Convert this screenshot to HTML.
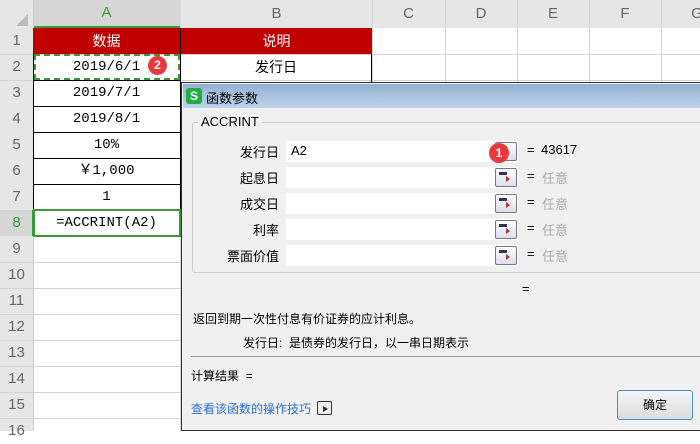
<!DOCTYPE html>
<html><head><meta charset="utf-8"><style>
*{margin:0;padding:0;box-sizing:border-box}
body{width:700px;height:431px;overflow:hidden;background:#fff;position:relative;font-family:"Liberation Sans","Noto Sans CJK SC",sans-serif;font-size:13px;color:#000}
.a{position:absolute}
.hdr{background:#e6e6e6;color:#555;font-size:15px;text-align:center}
.vl{position:absolute;width:1px;background:#d4d4d4}
.hl{position:absolute;height:1px;background:#d4d4d4}
.cell{position:absolute;left:33px;width:147px;text-align:center;font-family:"Liberation Mono","Noto Sans CJK SC",monospace;font-size:14px;line-height:26px}
.lab{position:absolute;right:421px;font-size:13px;text-align:right}
.inp{position:absolute;left:286px;width:232px;height:21px;background:#fff}
.btn{position:absolute;left:495px;width:22px;height:19px;border:1px solid #777;border-radius:2px;background:linear-gradient(#fff,#dde)}
.btn:before{content:"";position:absolute;left:3px;top:3px;width:8px;height:3px;background:#335}
.btn:after{content:"";position:absolute;left:10px;top:7px;width:0;height:0;border-left:4px solid #a33;border-top:3px solid transparent;border-bottom:3px solid transparent}
.eq{position:absolute;left:527px;font-size:13px}
.ry{position:absolute;left:542px;color:#aaa;font-size:13px}
</style></head><body>
<div class="a hdr" style="left:0;top:0;width:700px;height:28px"></div>
<div class="a" style="left:0;top:28px;width:33px;height:403px;background:#e6e6e6"></div>
<div class="a" style="left:33px;top:0;width:147px;height:28px;background:#d6d6d6;border-bottom:2px solid #3a9a3a;color:#3a9a3a;text-align:center;line-height:26px;font-size:15px">A</div>
<div class="a" style="left:181px;top:0;width:191px;line-height:28px;text-align:center;color:#666;font-size:15px">B</div>
<div class="a" style="left:372px;top:0;width:73px;line-height:28px;text-align:center;color:#666;font-size:15px">C</div>
<div class="a" style="left:445px;top:0;width:72px;line-height:28px;text-align:center;color:#666;font-size:15px">D</div>
<div class="a" style="left:517px;top:0;width:72px;line-height:28px;text-align:center;color:#666;font-size:15px">E</div>
<div class="a" style="left:589px;top:0;width:72px;line-height:28px;text-align:center;color:#666;font-size:15px">F</div>
<div class="a" style="left:661px;top:0;width:72px;line-height:28px;text-align:center;color:#666;font-size:15px">G</div>
<div class="a" style="left:16px;top:14px;width:0;height:0;border-left:12px solid transparent;border-bottom:12px solid #bbb"></div>
<div class="a" style="left:0;top:28px;width:33px;color:#666;font-size:15px;text-align:center;line-height:26px">
<div>1</div><div>2</div><div>3</div><div>4</div><div>5</div><div>6</div><div>7</div><div style="color:#3a9a3a;background:#d6d6d6">8</div><div>9</div><div>10</div><div>11</div><div>12</div><div>13</div><div>14</div><div>15</div><div>16</div></div>
<div class="a" style="left:32px;top:210px;width:1px;height:26px;background:#3a9a3a"></div>
<div class="vl" style="left:33px;top:0;height:431px;background:#ccc"></div>
<div class="vl" style="left:180px;top:0;height:431px"></div>
<div class="vl" style="left:372px;top:0;height:84px"></div>
<div class="vl" style="left:445px;top:0;height:84px"></div>
<div class="vl" style="left:517px;top:0;height:84px"></div>
<div class="vl" style="left:589px;top:0;height:84px"></div>
<div class="vl" style="left:661px;top:0;height:84px"></div>
<div class="hl" style="left:0;top:54px;width:700px"></div>
<div class="hl" style="left:0;top:80px;width:700px"></div>
<div class="hl" style="left:0;top:262px;width:180px"></div>
<div class="hl" style="left:0;top:288px;width:180px"></div>
<div class="hl" style="left:0;top:314px;width:180px"></div>
<div class="hl" style="left:0;top:340px;width:180px"></div>
<div class="hl" style="left:0;top:366px;width:180px"></div>
<div class="hl" style="left:0;top:392px;width:180px"></div>
<div class="hl" style="left:0;top:418px;width:180px"></div>
<div class="a" style="left:33px;top:28px;width:339px;height:26px;background:#c00000"></div>
<div class="a" style="left:33px;top:28px;width:147px;line-height:26px;text-align:center;color:#fff;font-size:14px">数据</div>
<div class="a" style="left:180px;top:28px;width:192px;line-height:26px;text-align:center;color:#fff;font-size:14px;border-left:1px solid #000">说明</div>
<div class="a" style="left:180px;top:54px;width:192px;height:30px;border:1px solid #000;border-top:none;line-height:26px;text-align:center;font-size:14px">发行日</div>
<div class="a" style="left:33px;top:54px;width:148px;height:182px;border-left:1px solid #000;border-right:1px solid #000"></div>
<div class="a" style="left:33px;top:80px;width:148px;height:1px;background:#000"></div>
<div class="a" style="left:33px;top:106px;width:148px;height:1px;background:#000"></div>
<div class="a" style="left:33px;top:132px;width:148px;height:1px;background:#000"></div>
<div class="a" style="left:33px;top:158px;width:148px;height:1px;background:#000"></div>
<div class="a" style="left:33px;top:184px;width:148px;height:1px;background:#000"></div>
<div class="a" style="left:33px;top:210px;width:148px;height:1px;background:#000"></div>
<div class="cell" style="top:54px">2019/6/1</div>
<div class="cell" style="top:80px">2019/7/1</div>
<div class="cell" style="top:106px">2019/8/1</div>
<div class="cell" style="top:132px">10%</div>
<div class="cell" style="top:158px">￥1,000</div>
<div class="cell" style="top:184px">1</div>
<div class="cell" style="top:210px">=ACCRINT(A2)</div>
<div class="a" style="left:34px;top:54px;width:146px;height:26px;border:2px dashed #3a9a3a;background:transparent"></div>
<div class="a" style="left:33px;top:209px;width:148px;height:28px;border:2px solid #3a9a3a"></div>
<div class="a" style="left:148px;top:56px;width:19px;height:19px;border-radius:50%;background:#e8393f;color:#fff;font-size:12px;font-weight:bold;text-align:center;line-height:19px">2</div>
<div class="a" style="left:181px;top:82px;width:519px;height:349px;background:#f0f0f0;border:1px solid #333;border-right:none"></div>
<div class="a" style="left:183px;top:84px;width:517px;height:24px;background:linear-gradient(#94b1d2,#bdd3ec)"></div>
<div class="a" style="left:186px;top:88px;width:16px;height:16px;border-radius:3px;background:#1fae3f;color:#fff;font-size:12px;font-weight:bold;text-align:center;line-height:16px">S</div>
<div class="a" style="left:206px;top:88px;font-size:13px">函数参数</div>
<div class="a" style="left:192px;top:122px;width:520px;height:151px;border:1px solid #ccc;border-radius:3px"></div>
<div class="a" style="left:198px;top:114px;background:#f0f0f0;padding:0 3px;font-size:13px">ACCRINT</div>
<div class="lab" style="top:142px">发行日</div>
<div class="lab" style="top:168px">起息日</div>
<div class="lab" style="top:194px">成交日</div>
<div class="lab" style="top:220px">利率</div>
<div class="lab" style="top:246px">票面价值</div>
<div class="inp" style="top:141px"></div><div class="a" style="left:291px;top:143px">A2</div>
<div class="inp" style="top:167px"></div>
<div class="inp" style="top:193px"></div>
<div class="inp" style="top:219px"></div>
<div class="inp" style="top:245px"></div>
<div class="btn" style="top:142px"></div><div class="btn" style="top:168px"></div><div class="btn" style="top:194px"></div><div class="btn" style="top:220px"></div><div class="btn" style="top:246px"></div>
<div class="a" style="left:489px;top:143px;width:20px;height:20px;border-radius:50%;background:#e8393f;color:#fff;font-size:12px;font-weight:bold;text-align:center;line-height:20px">1</div>
<div class="eq" style="top:142px">=</div><div class="a" style="left:541px;top:142px">43617</div>
<div class="eq" style="top:168px">=</div><div class="ry" style="top:168px">任意</div>
<div class="eq" style="top:194px">=</div><div class="ry" style="top:194px">任意</div>
<div class="eq" style="top:220px">=</div><div class="ry" style="top:220px">任意</div>
<div class="eq" style="top:246px">=</div><div class="ry" style="top:246px">任意</div>
<div class="a" style="left:522px;top:281px">=</div>
<div class="a" style="left:193px;top:310px;font-size:12px">返回到期一次性付息有价证券的应计利息。</div>
<div class="a" style="left:243px;top:334px;font-size:12px">发行日:&nbsp; 是债券的发行日，以一串日期表示</div>
<div class="a" style="left:191px;top:356px;width:509px;height:1px;background:#999"></div>
<div class="a" style="left:191px;top:367px;font-size:12px">计算结果&nbsp; =</div>
<div class="a" style="left:191px;top:400px;font-size:12px;color:#2b6fd6">查看该函数的操作技巧</div>
<div class="a" style="left:317px;top:401px;width:15px;height:14px;border:1px solid #333;border-radius:2px"><div style="position:absolute;left:5px;top:4px;border-left:5px solid #333;border-top:3px solid transparent;border-bottom:3px solid transparent"></div></div>
<div class="a" style="left:617px;top:390px;width:76px;height:30px;border:1px solid #4a8fc8;border-radius:3px;background:linear-gradient(#f4f4f4,#dcdcdc);text-align:center;line-height:28px;font-size:12px">确定</div>
</body></html>
